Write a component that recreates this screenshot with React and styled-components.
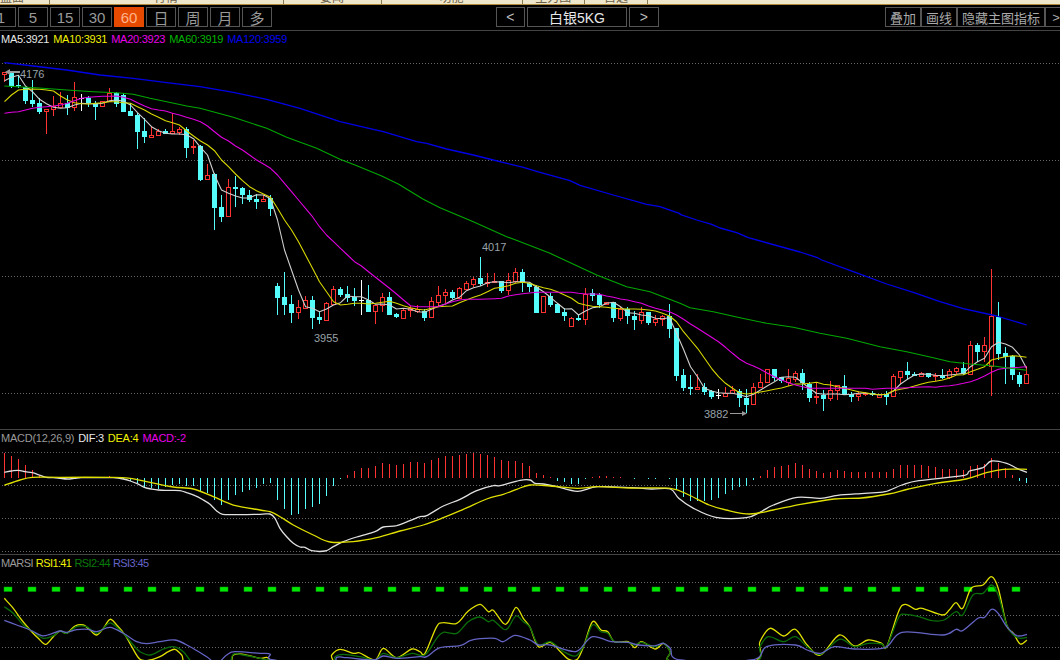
import React from "react";
import styled, { createGlobalStyle } from "styled-components";

const GlobalStyle = createGlobalStyle`
    html, body {
        margin: 0;
        padding: 0;
        background: #000;
    }
`;

const FONT = `"Liberation Sans", "Noto Sans CJK SC", sans-serif`;
const RED = "#ff3232";
const CYAN = "#54fcfc";

// values were read at 3x, so they are divided back to page pixels
const ys = (off, arr) => arr.map((v) => off + v / 3);
const pts = (xOff, yOff, arr, sx = 3) => arr.map(([x, y]) => [xOff + x / sx, yOff + y / 3]);
const cx = (i) => 4.5 + 7 * i;

const raw1 = [
    ["u", 37, 37, 42, 65], ["d", 38, 40, 78, 85], ["d", 45, 76, 79, 85], ["d", 80, 82, 123, 132], ["d", 60, 120, 133, 142],
    ["d", 115, 128, 156, 162], ["u", 148, 148, 155, 222], ["u", 108, 138, 149, 168], ["u", 97, 131, 141, 142], ["d", 105, 130, 143, 165],
    ["u", 66, 112, 143, 152], ["x", 102, 114, 116, 152], ["d", 108, 113, 130, 140], ["d", 122, 128, 141, 180], ["u", 122, 125, 140, 140],
    ["u", 84, 100, 123, 125], ["d", 96, 98, 132, 140], ["d", 100, 105, 156, 156], ["d", 130, 153, 168, 168], ["d", 160, 165, 216, 267],
    ["d", 175, 213, 232, 250], ["u", 197, 227, 231, 233], ["u", 208, 214, 227, 228], ["d", 208, 213, 221, 222], ["u", 160, 214, 219, 220],
    ["u", 200, 208, 217, 224], ["d", 200, 208, 264, 293], ["u", 240, 258, 262, 282], ["d", 255, 258, 360, 363], ["u", 312, 346, 358, 358],
    ["d", 340, 342, 443, 510], ["d", 405, 441, 471, 486], ["u", 357, 382, 470, 470], ["d", 348, 381, 386, 441], ["d", 380, 384, 405, 431],
    ["d", 390, 405, 419, 425], ["d", 403, 417, 426, 447], ["u", 405, 418, 425, 426], ["d", 405, 415, 447, 468], ["d", 670, 679, 714, 765],
    ["d", 636, 711, 735, 765], ["d", 705, 732, 760, 789], ["u", 720, 742, 758, 777], ["u", 708, 721, 744, 744], ["d", 708, 720, 774, 806],
    ["d", 755, 771, 780, 792], ["u", 725, 730, 780, 780], ["u", 678, 688, 732, 735], ["d", 680, 687, 706, 710], ["d", 678, 702, 715, 725],
];
const raw2 = [
    ["d", 145, 170, 183, 198], ["x", 120, 180, 182, 225], ["d", 135, 180, 215, 215], ["u", 195, 195, 215, 252], ["u", 160, 172, 197, 215],
    ["d", 157, 172, 225, 225], ["d", 218, 222, 231, 233], ["u", 208, 211, 234, 236], ["u", 198, 205, 212, 232], ["u", 196, 207, 215, 220],
    ["d", 208, 213, 233, 242], ["u", 172, 184, 233, 235], ["u", 138, 166, 186, 200], ["u", 148, 157, 166, 190], ["d", 150, 156, 175, 178],
    ["u", 142, 146, 175, 178], ["u", 122, 130, 147, 150], ["u", 110, 118, 132, 142], ["d", 52, 114, 133, 137], ["u", 98, 126, 130, 142],
    ["u", 98, 124, 128, 130], ["d", 122, 124, 152, 158], ["u", 100, 122, 152, 165], ["u", 85, 97, 124, 130], ["d", 88, 97, 130, 156],
    ["d", 125, 128, 141, 156], ["d", 135, 141, 218, 218], ["u", 168, 168, 218, 218], ["d", 160, 167, 194, 200], ["d", 190, 192, 218, 218],
    ["d", 205, 216, 229, 242], ["u", 230, 235, 260, 260], ["d", 225, 234, 240, 243], ["u", 145, 162, 239, 255], ["d", 148, 160, 167, 183],
    ["d", 160, 165, 195, 205], ["u", 187, 187, 192, 192], ["d", 185, 187, 234, 245], ["u", 200, 207, 234, 243], ["d", 200, 207, 228, 252],
    ["d", 212, 228, 240, 270], ["u", 202, 217, 240, 252], ["d", 215, 217, 250, 255], ["u", 225, 237, 247, 258], ["u", 226, 230, 238, 258],
    ["d", 193, 228, 267, 293], ["d", 264, 264, 408, 422],
];
const raw3 = [
    ["d", 327, 345, 385, 392], ["d", 345, 381, 386, 405], ["u", 343, 381, 387, 388], ["d", 370, 381, 396, 405], ["d", 390, 393, 410, 418],
    ["x", 388, 407, 409, 418], ["u", 380, 400, 410, 410], ["u", 378, 391, 401, 402], ["d", 388, 393, 415, 440], ["d", 388, 414, 435, 458],
    ["u", 370, 382, 434, 435], ["u", 343, 367, 383, 385], ["u", 327, 328, 368, 370], ["d", 327, 328, 353, 362], ["d", 350, 352, 362, 368],
    ["u", 327, 355, 366, 378], ["u", 333, 341, 358, 365], ["d", 327, 339, 370, 390], ["d", 365, 372, 413, 425], ["u", 370, 408, 412, 432],
    ["d", 390, 405, 416, 452], ["u", 362, 392, 415, 422], ["u", 375, 375, 392, 420], ["d", 345, 378, 405, 405], ["d", 395, 401, 411, 425],
    ["u", 392, 402, 409, 422], ["u", 395, 400, 403, 408], ["d", 392, 398, 404, 408], ["u", 403, 403, 412, 412], ["d", 392, 402, 410, 435],
    ["u", 343, 349, 410, 410], ["u", 335, 335, 352, 372], ["d", 307, 334, 344, 358], ["d", 337, 343, 348, 349], ["u", 335, 341, 348, 350],
    ["d", 338, 340, 352, 355], ["u", 340, 347, 350, 362], ["d", 327, 346, 353, 358], ["u", 327, 335, 352, 358], ["u", 320, 325, 335, 342],
    ["d", 307, 324, 342, 345], ["u", 243, 256, 343, 345], ["d", 250, 255, 275, 305], ["u", 232, 256, 275, 305], ["u", 27, 168, 318, 408],
    ["d", 127, 170, 282, 300], ["d", 262, 280, 290, 372], ["d", 285, 287, 345, 360], ["d", 337, 345, 372, 380], ["u", 318, 343, 370, 372],
];

const toCandles = (off, arr) =>
    arr.map(([k, wt, t, b, wb]) => ({ k, wt: off + wt / 3, t: off + t / 3, b: off + b / 3, wb: off + wb / 3 }));
const candles = [...toCandles(60, raw1), ...toCandles(240, raw2), ...toCandles(260, raw3)];

const byIndex = (arr) => arr.map((y, i) => [cx(i), y]);

const ma5 = byIndex([
    ...ys(60, [62, 52, 46, 78, 95, 118, 131, 142, 145, 143, 135, 130, 131, 132, 130, 122, 120, 124, 135, 158, 178, 200, 212, 220, 222, 222, 224, 236, 262, 285, 345, 390, 400, 408, 414, 414, 404, 405, 416, 480, 570, 630, 690, 740, 745, 755, 747, 735, 728, 708]),
    ...ys(240, [170, 170, 180, 193, 192, 195, 207, 205, 208, 215, 217, 208, 199, 192, 180, 172, 152, 143, 138, 128, 125, 126, 128, 125, 125, 127, 142, 155, 172, 190, 207, 206, 225, 213, 203, 200, 190, 187, 200, 218, 220, 225, 227, 235, 236, 233, 280]),
    ...ys(260, [268, 320, 350, 385, 393, 398, 400, 400, 404, 410, 403, 390, 377, 365, 352, 350, 352, 368, 385, 400, 403, 402, 402, 404, 403, 400, 400, 403, 405, 403, 393, 372, 358, 345, 342, 343, 346, 347, 345, 343, 340, 320, 305, 295, 260, 247, 252, 262, 285, 325]),
]);
const ma10 = byIndex([
    ...ys(60, [125, 105, 90, 88, 87, 88, 90, 93, 108, 120, 128, 131, 132, 130, 128, 125, 125, 128, 130, 140, 150, 162, 172, 182, 188, 195, 212, 228, 243, 255, 272, 300, 320, 342, 362, 380, 392, 402, 412, 445, 480, 510, 545, 585, 625, 665, 695, 725, 735, 733]),
    ...ys(240, [190, 190, 192, 190, 187, 184, 190, 197, 203, 208, 210, 205, 200, 199, 198, 188, 180, 172, 165, 155, 145, 142, 137, 130, 127, 130, 137, 143, 148, 155, 165, 175, 190, 195, 199, 200, 202, 205, 206, 207, 207, 208, 210, 213, 220, 228, 245]),
    ...ys(260, [215, 240, 265, 295, 325, 350, 370, 385, 398, 402, 400, 396, 392, 388, 384, 378, 372, 372, 370, 367, 373, 375, 380, 385, 390, 395, 398, 402, 404, 403, 392, 388, 384, 378, 372, 367, 364, 360, 354, 345, 344, 335, 328, 320, 300, 295, 290, 287, 289, 292]),
]);
const ma20 = byIndex([
    ...ys(60, [160, 157, 155, 150, 145, 142, 140, 138, 135, 130, 122, 115, 112, 110, 109, 109, 108, 112, 118, 128, 138, 146, 150, 153, 160, 165, 172, 178, 185, 198, 215, 232, 243, 258, 270, 285, 300, 312, 325, 345, 370, 395, 420, 445, 470, 500, 525, 545, 565, 585]),
    ...ys(240, [65, 78, 95, 112, 128, 145, 162, 180, 197, 200, 200, 200, 200, 192, 185, 180, 178, 178, 178, 177, 176, 175, 168, 164, 161, 159, 157, 157, 157, 157, 157, 157, 160, 162, 162, 163, 168, 172, 177, 180, 185, 190, 198, 205, 210, 215, 225]),
    ...ys(260, [178, 192, 205, 218, 232, 245, 262, 280, 297, 310, 318, 328, 340, 350, 360, 368, 375, 380, 385, 385, 385, 385, 385, 385, 385, 385, 385, 388, 386, 385, 385, 384, 383, 382, 381, 380, 382, 379, 377, 374, 370, 365, 358, 348, 337, 328, 325, 323, 322, 320]),
]);
const ma60 = [
    ...pts(0, 60, [[13, 78], [118, 84], [200, 90], [280, 95], [350, 98], [400, 103], [450, 115], [500, 125], [560, 138], [600, 145], [700, 172], [800, 205], [860, 232], [950, 265]]),
    ...pts(340, 110, [[0, 148], [45, 165], [125, 198], [175, 222], [250, 268], [300, 293], [400, 335], [500, 380]]),
    ...pts(350, 240, [[497, 0], [600, 40], [740, 105], [830, 140], [900, 155]]),
    ...pts(680, 260, [[0, 130], [30, 143], [100, 155], [180, 173], [260, 190], [340, 202], [420, 220], [500, 235], [600, 260], [680, 275], [760, 293], [810, 305], [870, 312], [940, 318], [1040, 331]]),
];
const ma120 = [
    ...pts(0, 60, [[13, 8], [100, 18], [200, 30], [300, 45], [400, 55], [500, 68], [600, 80], [700, 97], [800, 118], [900, 145], [1000, 178]]),
    ...pts(340, 110, [[0, 35], [100, 58], [130, 65], [230, 95], [260, 100], [320, 117], [400, 135], [460, 150], [550, 172], [600, 187], [690, 212], [720, 226], [820, 255], [920, 283], [960, 290], [1020, 311]]),
    ...pts(680, 190, [[0, 73], [50, 90], [95, 103], [120, 114], [170, 128], [205, 143], [360, 186], [410, 202]]),
    ...pts(680, 260, [[425, 0], [520, 35], [620, 72], [700, 97], [780, 125], [850, 146], [950, 168], [1040, 195]]),
];

const macdBars = [
    85, 93, 102, 120, 135, 150, 155, 156, 161, 160, 160, 159, 158, 160, 160, 153, 160, 163, 168, 175, 188, 190, 193, 185, 180, 178, 182, 183, 200, 205, 225, 240, 225, 210, 200, 195, 188,
    177, 173, 224, 252, 270, 267, 252, 245, 237, 213, 183, 162, 150, 138, 128, 129, 123, 113, 117, 120, 117, 111, 111, 114, 105, 99, 93, 93, 90, 87, 84, 87, 90, 96, 105, 108, 108, 114, 122,
    145, 150, 157, 168, 172, 177, 177, 163, 157, 153, 153, 157, 157, 159, 162, 160, 162, 162, 160, 162, 192, 215, 228, 228, 228, 225, 218, 207, 195, 185, 183, 165, 153, 135, 125, 122, 120, 114, 120, 132, 138, 144, 141, 135, 138, 141, 141, 141, 141, 141, 141, 132, 120, 120, 120, 120, 123, 126, 132, 132, 132, 135, 123, 120, 117, 99, 114, 128, 150, 168, 174,
];

const dif = [
    ...pts(0, 425, [[13, 142], [35, 138], [55, 136], [76, 140], [97, 143], [118, 150], [139, 157], [160, 158], [181, 160], [202, 162], [223, 160], [244, 158], [265, 158], [300, 158], [340, 158], [370, 162], [391, 168], [412, 176], [433, 187], [454, 192], [475, 195], [496, 196], [517, 196], [540, 197], [560, 203], [585, 212], [610, 225], [630, 238], [650, 258], [668, 268], [700, 269]]),
    ...pts(260, 425, [[0, 268], [30, 267], [45, 280], [60, 310], [80, 335], [100, 355], [120, 366], [135, 367], [155, 377], [195, 378], [220, 365], [250, 350], [290, 336], [345, 320], [370, 306], [410, 302], [450, 287], [480, 275], [500, 272], [550, 243], [600, 223], [650, 197], [700, 182], [720, 182], [780, 166]]),
    ...pts(530, 425, [[0, 165], [15, 175], [40, 177], [80, 185], [140, 199], [200, 185], [300, 188], [360, 192], [415, 192], [440, 220], [480, 248], [550, 277], [640, 278], [680, 262], [720, 240], [790, 217], [860, 220], [910, 211], [990, 205], [1050, 200], [1100, 180], [1150, 167], [1280, 152], [1300, 138], [1340, 128], [1365, 108], [1410, 115], [1440, 130], [1470, 142]], 2.958),
];
const dea = [
    ...pts(0, 425, [[13, 181], [60, 165], [97, 157], [180, 157], [340, 157], [390, 160], [450, 172], [520, 186], [580, 192], [640, 215], [700, 240]]),
    ...pts(260, 425, [[0, 255], [30, 260], [60, 275], [100, 300], [160, 330], [210, 351], [280, 350], [350, 338], [420, 318], [490, 300], [550, 278], [610, 253], [680, 222], [730, 208], [770, 193]]),
    ...pts(530, 425, [[0, 180], [60, 183], [140, 190], [200, 185], [300, 189], [415, 190], [470, 210], [530, 240], [580, 255], [650, 267], [720, 255], [800, 238], [900, 222], [980, 219], [1060, 207], [1120, 192], [1200, 175], [1290, 162], [1350, 143], [1400, 133], [1470, 133]], 2.958),
];
const rsi1 = [
    ...pts(0, 425, [[13, 520], [40, 550], [65, 585], [95, 620], [115, 640], [137, 658], [160, 635], [180, 618], [200, 625], [225, 603], [250, 600], [270, 615], [290, 630], [310, 610], [330, 583], [350, 600], [375, 630], [395, 665], [420, 703], [450, 705], [480, 695], [505, 680], [525, 673], [545, 690], [565, 720], [680, 720], [700, 690], [730, 688]]),
    ...pts(260, 425, [[0, 700], [20, 697], [30, 705], [40, 720], [205, 720], [215, 690], [240, 673], [280, 685], [300, 684], [345, 705], [370, 670], [410, 698], [455, 672], [480, 680], [495, 685], [530, 605], [550, 593], [590, 595], [625, 558], [660, 538], [685, 560], [700, 556], [730, 595], [745, 590], [768, 547], [790, 580]]),
    ...pts(530, 425, [[0, 607], [25, 665], [60, 652], [90, 680], [115, 703], [140, 703], [160, 660], [185, 590], [210, 615], [230, 620], [250, 650], [290, 650], [310, 668], [330, 650], [370, 672], [395, 655], [415, 680], [425, 710], [660, 710], [680, 650], [710, 610], [750, 633], [785, 613], [820, 660], [860, 690], [915, 630], [960, 663], [1000, 645], [1040, 655], [1055, 665], [1090, 560], [1110, 538], [1140, 553], [1160, 550], [1220, 570], [1240, 555], [1260, 533], [1280, 550], [1305, 490], [1340, 480], [1365, 455], [1385, 490], [1410, 600], [1430, 625], [1450, 657], [1470, 645]], 2.958),
];
const rsi2 = [
    ...pts(0, 425, [[13, 545], [40, 565], [70, 600], [100, 620], [130, 640], [160, 632], [180, 618], [200, 625], [230, 605], [260, 605], [290, 625], [320, 600], [335, 595], [370, 625], [400, 660], [420, 680], [450, 690], [490, 672], [520, 665], [550, 680], [590, 720], [680, 720], [700, 688], [730, 690]]),
    ...pts(260, 425, [[0, 700], [30, 705], [210, 720], [225, 695], [250, 688], [300, 695], [345, 705], [370, 685], [410, 698], [455, 685], [495, 690], [530, 640], [550, 622], [590, 625], [625, 590], [660, 576], [685, 590], [700, 586], [730, 612], [745, 608], [768, 573], [790, 590]]),
    ...pts(530, 425, [[0, 607], [25, 660], [60, 650], [100, 680], [135, 693], [160, 660], [185, 600], [210, 620], [230, 625], [250, 650], [290, 652], [310, 660], [330, 652], [370, 665], [395, 655], [415, 680], [425, 710], [660, 710], [680, 665], [705, 635], [750, 650], [785, 635], [820, 665], [860, 688], [915, 643], [960, 665], [1000, 655], [1040, 657], [1055, 665], [1090, 578], [1110, 568], [1150, 575], [1190, 587], [1225, 585], [1260, 560], [1280, 570], [1310, 510], [1340, 505], [1365, 480], [1385, 510], [1410, 600], [1430, 630], [1450, 640], [1470, 637]], 2.958),
];
const rsi3 = [
    ...pts(0, 425, [[13, 586], [50, 600], [90, 615], [125, 632], [150, 628], [180, 618], [200, 622], [230, 614], [265, 613], [290, 620], [330, 607], [370, 625], [410, 650], [440, 656], [480, 650], [525, 645], [570, 665], [620, 695], [650, 715], [680, 690], [705, 680]]),
    ...pts(260, 425, [[0, 685], [30, 687], [40, 705], [210, 720], [230, 697], [260, 698], [340, 705], [370, 693], [410, 700], [480, 695], [500, 695], [540, 668], [600, 662], [630, 647], [660, 641], [705, 640], [730, 650], [765, 631]]),
    ...pts(530, 425, [[0, 645], [25, 660], [60, 660], [120, 678], [145, 675], [185, 635], [240, 650], [290, 652], [320, 660], [370, 662], [395, 655], [415, 670], [445, 705], [655, 705], [700, 665], [785, 660], [820, 675], [860, 685], [900, 665], [960, 672], [1050, 668], [1100, 622], [1220, 630], [1260, 613], [1280, 617], [1325, 580], [1345, 577], [1365, 553], [1385, 565], [1410, 605], [1440, 632], [1470, 628]], 2.958),
];

const linePath = (p) => "M" + p.map(([x, y]) => `${x.toFixed(1)} ${y.toFixed(1)}`).join("L");

// catmull-rom, the sub charts in the reference are drawn smooth
const smoothPath = (p) => {
    let d = `M${p[0][0].toFixed(1)} ${p[0][1].toFixed(1)}`;
    for (let i = 0; i < p.length - 1; i++) {
        const a = p[i - 1] || p[i];
        const b = p[i];
        const c = p[i + 1];
        const e = p[i + 2] || c;
        const c1x = b[0] + (c[0] - a[0]) / 6;
        const c1y = b[1] + (c[1] - a[1]) / 6;
        const c2x = c[0] - (e[0] - b[0]) / 6;
        const c2y = c[1] - (e[1] - b[1]) / 6;
        d += `C${c1x.toFixed(1)} ${c1y.toFixed(1)} ${c2x.toFixed(1)} ${c2y.toFixed(1)} ${c[0].toFixed(1)} ${c[1].toFixed(1)}`;
    }
    return d;
};

const Candle = ({ i, c }) => {
    const x = cx(i);
    if (c.k === "d") {
        return (
            <g>
                <line x1={x} x2={x} y1={c.wt} y2={c.wb} stroke={CYAN} />
                <rect x={x - 2.5} y={c.t} width={5} height={Math.max(c.b - c.t, 1)} fill={CYAN} />
            </g>
        );
    }
    if (c.k === "x") {
        return (
            <g>
                <line x1={x} x2={x} y1={c.wt} y2={c.wb} stroke="#fff" />
                <line x1={x - 2.5} x2={x + 2.5} y1={c.t} y2={c.t} stroke="#fff" />
            </g>
        );
    }
    return (
        <g>
            <line x1={x} x2={x} y1={c.wt} y2={c.t} stroke={RED} />
            <line x1={x} x2={x} y1={c.b} y2={c.wb} stroke={RED} />
            <rect x={x - 2} y={c.t} width={4} height={Math.max(c.b - c.t, 1)} fill="#000" stroke={RED} />
        </g>
    );
};

const GridLines = ({ at }) =>
    at.map((y) => <GridLine key={y} x1={2} x2={1060} y1={y + 0.5} y2={y + 0.5} />);

const tabs = [
    { w: 49.5, label: "盘面", side: "flex-start" },
    { w: 234, label: "行情" },
    { w: 98, label: "要闻" },
    { w: 141, label: "功能" },
    { w: 62.5, label: "主力图" },
    { w: 63, label: "自选" },
];
const periods = ["1", "5", "15", "30", "60", "日", "周", "月", "多"];

const App = () => {
    return (
        <>
            <GlobalStyle />
            <Page>
                <TopStrip>
                    {tabs.map((t) => (
                        <TopCell key={t.label} $w={t.w} $side={t.side}>
                            {t.label}
                        </TopCell>
                    ))}
                </TopStrip>
                <Toolbar>
                    <PeriodGroup>
                        {periods.map((p) => (
                            <PeriodBtn key={p} $active={p === "60"}>
                                {p}
                            </PeriodBtn>
                        ))}
                    </PeriodGroup>
                    <SymbolGroup>
                        <ArrowBtn>&lt;</ArrowBtn>
                        <SymbolName>白银5KG</SymbolName>
                        <ArrowBtn>&gt;</ArrowBtn>
                    </SymbolGroup>
                    <ToolGroup>
                        <ToolBtn $w={36}>叠加</ToolBtn>
                        <ToolBtn $w={36}>画线</ToolBtn>
                        <ToolBtn $w={88}>隐藏主图指标</ToolBtn>
                        <ToolBtn $w={22}>&gt;</ToolBtn>
                    </ToolGroup>
                </Toolbar>

                <MainPane>
                    <Legend>
                        <Tag $c="#e8e8e8">MA5:3921</Tag>
                        <Tag $c="#f0f000">MA10:3931</Tag>
                        <Tag $c="#e800e8">MA20:3923</Tag>
                        <Tag $c="#00b400">MA60:3919</Tag>
                        <Tag $c="#0000f0">MA120:3959</Tag>
                    </Legend>
                    <Chart viewBox="0 47 1060 382">
                        <GridLines at={[63, 160, 276, 393]} />
                        <g shapeRendering="crispEdges">
                            {candles.map((c, i) => (
                                <Candle key={i} i={i} c={c} />
                            ))}
                        </g>
                        <Curve d={linePath(ma5)} stroke="#cfcfcf" />
                        <Curve d={linePath(ma10)} stroke="#d8d800" />
                        <Curve d={linePath(ma20)} stroke="#e000e0" />
                        <Curve d={linePath(ma60)} stroke="#00a800" />
                        <Curve d={linePath(ma120)} stroke="#0000e8" $w={1.3} />
                        <PriceLabel x={20} y={78}>4176</PriceLabel>
                        <PriceLabel x={482} y={251}>4017</PriceLabel>
                        <PriceLabel x={314} y={342}>3955</PriceLabel>
                        <PriceLabel x={704} y={418}>3882</PriceLabel>
                        <path d="M5 72l5-3v2h10v2h-10v2z" fill="#999" />
                        <path d="M730 413.5h13" stroke="#999" fill="none" />
                        <path d="M747 413.5l-5-2.5v5z" fill="#999" />
                    </Chart>
                </MainPane>

                <MacdPane>
                    <Legend>
                        <Tag $c="#999">MACD(12,26,9)</Tag>
                        <Tag $c="#e8e8e8">DIF:3</Tag>
                        <Tag $c="#f0f000">DEA:4</Tag>
                        <Tag $c="#e800e8">MACD:-2</Tag>
                    </Legend>
                    <Chart viewBox="0 446 1060 108">
                        <GridLines at={[452, 485, 518, 551]} />
                        <g shapeRendering="crispEdges">
                            {macdBars.map((v, i) => {
                                const end = 425 + v / 3;
                                const zero = 477.5;
                                return (
                                    <line
                                        key={i}
                                        x1={cx(i)}
                                        x2={cx(i)}
                                        y1={Math.min(end, zero)}
                                        y2={Math.max(end, zero)}
                                        stroke={end < zero ? RED : CYAN}
                                    />
                                );
                            })}
                        </g>
                        <Curve d={smoothPath(dif)} stroke="#e0e0e0" $w={1.3} />
                        <Curve d={smoothPath(dea)} stroke="#e0e000" $w={1.3} />
                    </Chart>
                </MacdPane>

                <RsiPane>
                    <Legend $tight>
                        <Tag $c="#999">MARSI</Tag>
                        <Tag $c="#f0f000">RSI1:41</Tag>
                        <Tag $c="#0a7a0a">RSI2:44</Tag>
                        <Tag $c="#6464c8">RSI3:45</Tag>
                    </Legend>
                    <Chart viewBox="0 571 1060 89">
                        <GridLines at={[582, 615, 647]} />
                        {Array.from({ length: 43 }, (_, i) => (
                            <Dash key={i} x={4 + 24 * i} y={587} width={8} height={4.5} />
                        ))}
                        <Curve d={smoothPath(rsi1)} stroke="#e0e000" $w={1.3} />
                        <Curve d={smoothPath(rsi2)} stroke="#0a6e0a" $w={1.3} />
                        <Curve d={smoothPath(rsi3)} stroke="#6464c4" $w={1.3} />
                    </Chart>
                </RsiPane>
            </Page>
        </>
    );
};

const Page = styled.div`
    width: 1060px;
    height: 660px;
    background: #000;
    overflow: hidden;
    display: flex;
    flex-direction: column;
    font-family: ${FONT};
`;

const TopStrip = styled.div`
    display: flex;
    height: 4px;
    flex: none;
    background: #efe7cb;
    border-bottom: 1px solid #b08a3c;
    overflow: hidden;
`;

const TopCell = styled.div`
    box-sizing: border-box;
    width: ${(p) => p.$w}px;
    flex: none;
    height: 4px;
    display: flex;
    align-items: flex-end;
    justify-content: ${(p) => p.$side || "center"};
    border-right: 1px solid #8a7a50;
    font-size: 12px;
    line-height: 12px;
    color: #6a6048;
    white-space: nowrap;
    overflow: hidden;
`;

const Toolbar = styled.div`
    display: flex;
    flex: none;
    height: 23px;
    padding-top: 2px;
    box-sizing: content-box;
    border-bottom: 1px solid #444;
`;

const PeriodGroup = styled.div`
    display: flex;
    gap: 2px;
    margin-left: -14px;
    height: 20px;
`;

const BaseBtn = styled.div`
    box-sizing: border-box;
    height: 20px;
    flex: none;
    display: flex;
    align-items: center;
    justify-content: center;
    border: 1px solid #555;
    white-space: nowrap;
`;

const PeriodBtn = styled(BaseBtn)`
    width: 30px;
    font-size: 15px;
    color: ${(p) => (p.$active ? "#ffb38a" : "#999")};
    background: ${(p) => (p.$active ? "#e64a00" : "transparent")};
    border-color: ${(p) => (p.$active ? "#e64a00" : "#555")};
`;

const SymbolGroup = styled.div`
    display: flex;
    gap: 2px;
    margin-left: 223.5px;
    height: 20px;
`;

const ArrowBtn = styled(BaseBtn)`
    width: 29.5px;
    font-size: 14px;
    color: #bbb;
`;

const SymbolName = styled(BaseBtn)`
    width: 100px;
    font-size: 14px;
    color: #e8e8e8;
`;

const ToolGroup = styled.div`
    display: flex;
    margin-left: 226.5px;
    height: 20px;
`;

const ToolBtn = styled(BaseBtn)`
    width: ${(p) => p.$w}px;
    font-size: 13px;
    color: #aaa;
`;

const PaneBase = styled.div`
    box-sizing: border-box;
    flex: none;
    display: flex;
    flex-direction: column;
`;

const MainPane = styled(PaneBase)`
    height: 399px;
    border-bottom: 1px solid #444;
`;

const MacdPane = styled(PaneBase)`
    height: 125px;
    border-bottom: 1px solid #444;
`;

const RsiPane = styled(PaneBase)`
    height: 105px;
`;

const Legend = styled.div`
    display: flex;
    flex: none;
    height: 16px;
    align-items: center;
    gap: ${(p) => (p.$tight ? "3px" : "4px")};
    padding-left: 1px;
    font-size: 11px;
    letter-spacing: ${(p) => (p.$tight ? "-0.6px" : "-0.25px")};
`;

const Tag = styled.span`
    color: ${(p) => p.$c};
    white-space: nowrap;
`;

const Chart = styled.svg`
    display: block;
    width: 1060px;
    flex: 1;
    min-height: 0;
`;

const GridLine = styled.line`
    stroke: #666;
    stroke-width: 1;
    stroke-dasharray: 1 2;
    shape-rendering: crispEdges;
`;

const Curve = styled.path`
    fill: none;
    stroke-width: ${(p) => p.$w || 1.1};
    stroke-linejoin: round;
`;

const PriceLabel = styled.text`
    font-family: ${FONT};
    font-size: 11px;
    fill: #98a0a8;
`;

const Dash = styled.rect`
    fill: #00e800;
    stroke: #00a000;
    stroke-width: 0.5;
`;

export default App;
